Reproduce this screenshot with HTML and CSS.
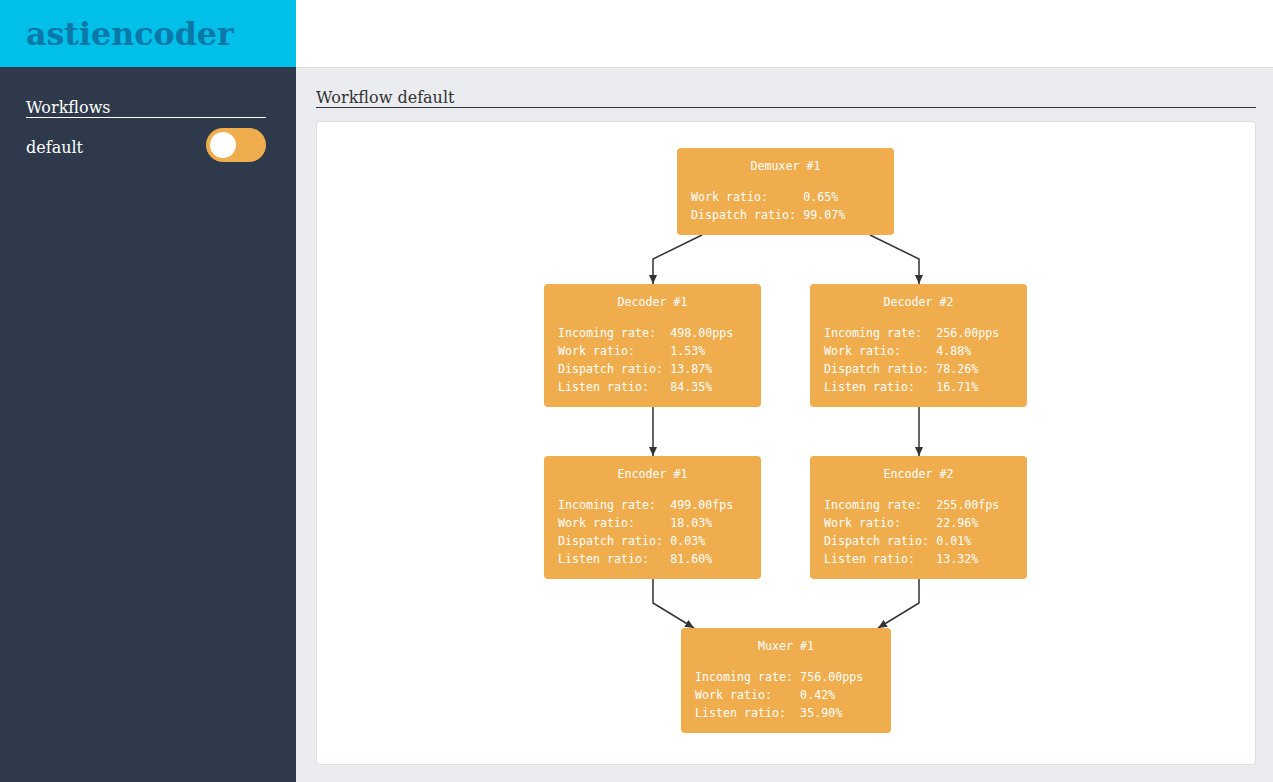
FILE: index.html
```html
<!DOCTYPE html>
<html>
<head>
<meta charset="utf-8">
<title>astiencoder</title>
<link rel="stylesheet" href="styles.css">
</head>
<body>
<header class="header">
  <div class="logo">astiencoder</div>
  <div class="header-rest"></div>
</header>
<div class="layout">
  <aside class="sidebar">
    <div class="side-title">Workflows</div>
    <div class="wf-row">
      <span class="wf-name">default</span>
      <span class="toggle"><span class="knob"></span></span>
    </div>
  </aside>
  <main class="main">
    <div class="main-title">Workflow default</div>
    <div class="card">
      <svg class="edges" width="938" height="642" viewBox="0 0 938 642">
        <defs>
          <marker id="ah" markerUnits="userSpaceOnUse" markerWidth="10" markerHeight="8" refX="9" refY="4" orient="auto">
            <path d="M0,0 L9,4 L0,8 z" fill="#333"/>
          </marker>
        </defs>
        <polyline points="385,113 336,137 336,162" marker-end="url(#ah)"/>
        <polyline points="553,113 602,137 602,162" marker-end="url(#ah)"/>
        <polyline points="336,285 336,334" marker-end="url(#ah)"/>
        <polyline points="602,285 602,334" marker-end="url(#ah)"/>
        <polyline points="336,457 336,481 377,506" marker-end="url(#ah)"/>
        <polyline points="602,457 602,481 561,506" marker-end="url(#ah)"/>
      </svg>
      <div class="node n-demux">
        <div class="node-title">Demuxer #1</div>
        <pre class="node-body">Work ratio:     0.65%
Dispatch ratio: 99.07%</pre>
      </div>
      <div class="node n-dec1">
        <div class="node-title">Decoder #1</div>
        <pre class="node-body">Incoming rate:  498.00pps
Work ratio:     1.53%
Dispatch ratio: 13.87%
Listen ratio:   84.35%</pre>
      </div>
      <div class="node n-dec2">
        <div class="node-title">Decoder #2</div>
        <pre class="node-body">Incoming rate:  256.00pps
Work ratio:     4.88%
Dispatch ratio: 78.26%
Listen ratio:   16.71%</pre>
      </div>
      <div class="node n-enc1">
        <div class="node-title">Encoder #1</div>
        <pre class="node-body">Incoming rate:  499.00fps
Work ratio:     18.03%
Dispatch ratio: 0.03%
Listen ratio:   81.60%</pre>
      </div>
      <div class="node n-enc2">
        <div class="node-title">Encoder #2</div>
        <pre class="node-body">Incoming rate:  255.00fps
Work ratio:     22.96%
Dispatch ratio: 0.01%
Listen ratio:   13.32%</pre>
      </div>
      <div class="node n-mux">
        <div class="node-title">Muxer #1</div>
        <pre class="node-body">Incoming rate: 756.00pps
Work ratio:    0.42%
Listen ratio:  35.90%</pre>
      </div>
    </div>
  </main>
</div>
</body>
</html>
```
FILE: styles.css
```css
* { box-sizing: border-box; }
html, body { margin: 0; padding: 0; height: 100%; }
body {
  font-family: "DejaVu Serif", serif;
  background: #ebecf0;
  overflow: hidden;
}
.header {
  display: flex;
  height: 67px;
}
.logo {
  width: 296px;
  flex: none;
  background: #00bfe9;
  color: #0b78a8;
  font-family: "DejaVu Serif", serif;
  font-weight: bold;
  font-size: 31.7px;
  line-height: 67px;
  padding-left: 26px;
}
.header-rest {
  flex: 1;
  background: #fff;
}
.layout {
  display: flex;
  height: 715px;
}
.sidebar {
  width: 296px;
  flex: none;
  background: #2e3a4c;
  color: #fff;
  padding: 30px 30px 0 26px;
}
.side-title {
  font-size: 16px;
  line-height: 18px;
  padding-top: 2px;
  border-bottom: 1px solid #fff;
}
.wf-row {
  display: flex;
  align-items: center;
  justify-content: space-between;
  margin-top: 10px;
  height: 34px;
}
.wf-name {
  font-size: 16px;
  padding-top: 5px;
}
.toggle {
  width: 60px;
  height: 34px;
  border-radius: 17px;
  background: #f0ad4e;
  position: relative;
  display: block;
}
.knob {
  position: absolute;
  left: 4px;
  top: 4px;
  width: 26px;
  height: 26px;
  border-radius: 50%;
  background: #fff;
}
.main {
  flex: 1;
  display: flex;
  flex-direction: column;
  border-top: 1px solid #dcdde0;
  padding: 20px 17px 17px 20px;
  min-width: 0;
}
.main-title {
  font-size: 16px;
  line-height: 19px;
  color: #333;
  border-bottom: 1px solid #333;
}
.card {
  flex: 1;
  margin-top: 13px;
  background: #fff;
  border: 1px solid #dcdcdc;
  border-radius: 4px;
  position: relative;
}
.edges {
  position: absolute;
  left: 0;
  top: 0;
}
.edges polyline {
  fill: none;
  stroke: #333;
  stroke-width: 1.5;
}
.node {
  position: absolute;
  background: #f0ad4e;
  border-radius: 4px;
  color: #fff;
  font-family: "DejaVu Sans Mono", monospace;
  font-size: 11.65px;
  line-height: 18px;
  padding: 9px 14px 11px 14px;
}
.node-title {
  text-align: center;
  margin-bottom: 13px;
}
.node-body {
  margin: 0;
  font: inherit;
  white-space: pre;
}
.n-demux { left: 360px; top: 26px; width: 217px; height: 87px; }
.n-dec1 { left: 227px; top: 162px; width: 217px; height: 123px; }
.n-dec2 { left: 493px; top: 162px; width: 217px; height: 123px; }
.n-enc1 { left: 227px; top: 334px; width: 217px; height: 123px; }
.n-enc2 { left: 493px; top: 334px; width: 217px; height: 123px; }
.n-mux { left: 364px; top: 506px; width: 210px; height: 105px; }
```
